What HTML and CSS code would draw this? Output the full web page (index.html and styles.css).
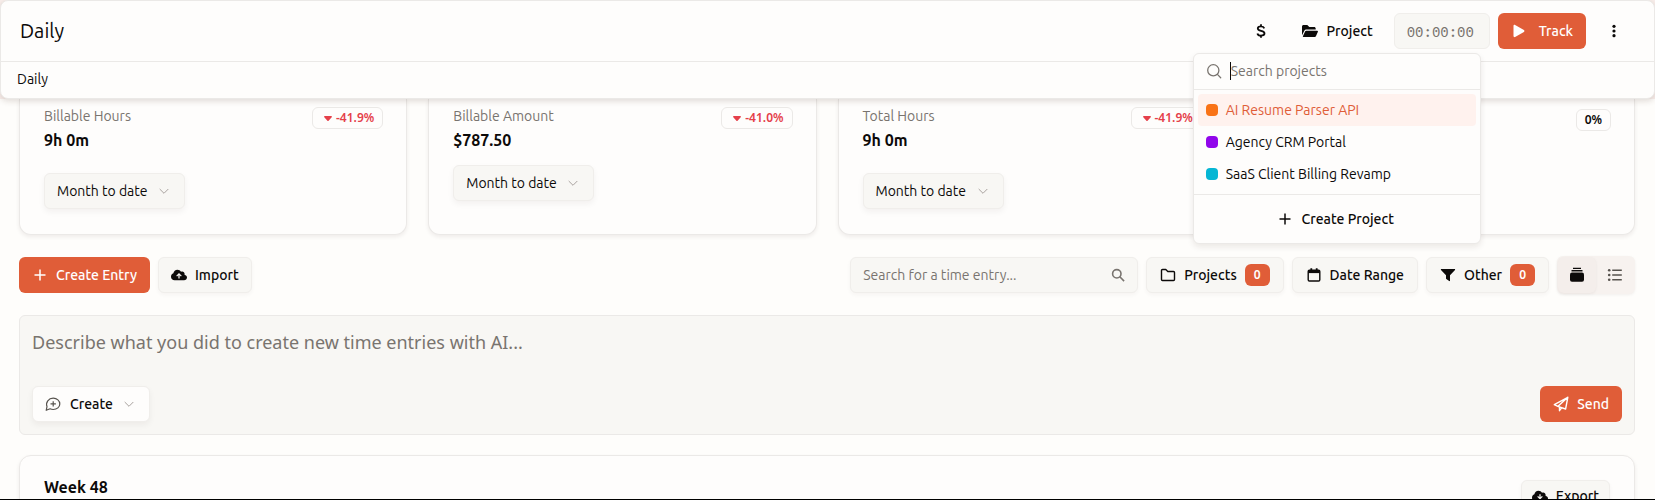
FILE: index.html
```html
<!DOCTYPE html>
<html lang="en">
<head>
<meta charset="utf-8">
<meta name="viewport" content="width=device-width, initial-scale=1">
<title>Daily</title>
<link rel="stylesheet" href="styles.css">
</head>
<body>
<div class="app">
  <header class="header">
    <div class="topbar">
      <h1 class="title">Daily</h1>
      <div class="tracker">
        <button class="icon-btn" type="button" aria-label="Billable">
          <svg class="ico" viewBox="0 0 16 16" fill="none" stroke="currentColor" stroke-width="1.800"><path d="M8 1.200v2.200M8 12.600v2.200M11.300 5.400C10.800 4 9.600 3.400 8 3.400c-1.900 0-3.200.8-3.200 2.200C4.800 8.900 11.500 6.900 11.500 10.300c0 1.500-1.500 2.300-3.500 2.300-1.800 0-3.200-.7-3.600-2.200"/></svg>
        </button>
        <div class="picker">
          <button class="btn ghost" type="button" aria-expanded="true">
            <svg class="ico" viewBox="0 0 16 16" fill="currentColor"><path d="M0 12.200V3.500C0 2.700.7 2 1.500 2H5.300l2 2h4.900c.8 0 1.500.7 1.500 1.500V6.600H4.200c-.8 0-1.500.4-1.900 1.100zM.9 13.300 3.200 8.300c.2-.4.6-.6 1-.6h11c.6 0 .9.6.7 1.100l-2 4.500c-.2.4-.6.7-1.100.7H1.400c-.5 0-.7-.3-.5-.7z"/></svg>
            Project
          </button>
          <div class="menu">
            <label class="menu-search">
              <svg class="ico" viewBox="0 0 16 16" fill="none" stroke="currentColor" stroke-width="1.300" stroke-linecap="round"><circle cx="7.300" cy="7.300" r="5.600"/><path d="m11.400 11.400 3.300 3.300"/></svg>
              <input type="text" placeholder="Search projects" aria-label="Search projects">
            </label>
            <ul class="menu-list">
              <li><button class="option active" type="button"><span class="swatch orange"></span>AI Resume Parser API</button></li>
              <li><button class="option" type="button"><span class="swatch purple"></span>Agency CRM Portal</button></li>
              <li><button class="option" type="button"><span class="swatch cyan"></span>SaaS Client Billing Revamp</button></li>
            </ul>
            <div class="menu-foot">
              <button class="btn ghost" type="button">
                <svg class="ico small" viewBox="0 0 12 12" fill="none" stroke="currentColor" stroke-width="1.500"><path d="M6 .5v11M.5 6h11"/></svg>
                Create Project
              </button>
            </div>
          </div>
        </div>
        <input class="timer" type="text" placeholder="00:00:00" aria-label="Duration">
        <button class="btn primary track" type="button">
          <svg class="ico" viewBox="0 0 16 16" fill="currentColor"><path d="M2.500 2.900v10.200c0 .8.900 1.300 1.600.9l8.800-5.100c.7-.4.7-1.400 0-1.800L4.100 2c-.7-.4-1.600.1-1.600.9z"/></svg>
          Track
        </button>
        <button class="icon-btn" type="button" aria-label="More">
          <svg class="ico" viewBox="0 0 16 16" fill="currentColor"><circle cx="8" cy="3.300" r="1.600"/><circle cx="8" cy="8" r="1.600"/><circle cx="8" cy="12.700" r="1.600"/></svg>
        </button>
      </div>
    </div>
    <nav class="crumbs"><a href="#daily">Daily</a></nav>
  </header>

  <main class="content">
    <section class="stats">
      <article class="card stat">
        <div class="stat-head"><div><p class="label">Billable Hours</p><p class="value">9h 0m</p></div>
          <span class="delta down"><svg viewBox="0 0 8 5" fill="currentColor"><path d="M.8 0h6.400c.7 0 1 .7.500 1.200L4.600 4.700c-.3.300-.9.300-1.200 0L.3 1.200C-.2.700.1 0 .8 0z"/></svg>-41.9%</span></div>
        <label class="select"><select aria-label="Billable hours period"><option>Month to date</option></select>
          <svg class="chev" viewBox="0 0 10 10" fill="none" stroke="currentColor"><path d="m.7 3 4.300 4.300L9.300 3"/></svg></label>
      </article>
      <article class="card stat tight">
        <div class="stat-head"><div><p class="label">Billable Amount</p><p class="value">$787.50</p></div>
          <span class="delta down"><svg viewBox="0 0 8 5" fill="currentColor"><path d="M.8 0h6.400c.7 0 1 .7.500 1.200L4.600 4.700c-.3.300-.9.300-1.200 0L.3 1.200C-.2.700.1 0 .8 0z"/></svg>-41.0%</span></div>
        <label class="select"><select aria-label="Billable amount period"><option>Month to date</option></select>
          <svg class="chev" viewBox="0 0 10 10" fill="none" stroke="currentColor"><path d="m.7 3 4.300 4.300L9.300 3"/></svg></label>
      </article>
      <article class="card stat">
        <div class="stat-head"><div><p class="label">Total Hours</p><p class="value">9h 0m</p></div>
          <span class="delta down"><svg viewBox="0 0 8 5" fill="currentColor"><path d="M.8 0h6.400c.7 0 1 .7.500 1.200L4.600 4.700c-.3.300-.9.300-1.200 0L.3 1.200C-.2.700.1 0 .8 0z"/></svg>-41.9%</span></div>
        <label class="select"><select aria-label="Total hours period"><option>Month to date</option></select>
          <svg class="chev" viewBox="0 0 10 10" fill="none" stroke="currentColor"><path d="m.7 3 4.300 4.300L9.300 3"/></svg></label>
      </article>
      <article class="card stat last">
        <div class="stat-head"><span class="delta">0%</span></div>
      </article>
    </section>

    <section class="toolbar">
      <button class="btn primary" type="button">
        <svg class="ico" viewBox="0 0 16 16" fill="none" stroke="currentColor" stroke-width="1.500"><path d="M8 2.500v11M2.500 8h11"/></svg>
        Create Entry
      </button>
      <button class="btn soft import" type="button">
        <svg class="ico" viewBox="0 0 18 16" fill="currentColor"><path fill-rule="evenodd" d="M4.100 14C1.800 14 0 12.200 0 9.900c0-1.800 1.100-3.300 2.700-3.800C2.900 3.700 4.900 2 7.300 2c1.700 0 3.200.9 4 2.300.4-.2.900-.3 1.300-.3 1.500 0 2.700 1.200 2.700 2.700 0 .3 0 .600-.1.900 1.600.4 2.800 1.600 2.800 3.200 0 1.800-1.500 3.200-3.300 3.200zM9 5.700 5.900 8.800l.9.900 1.500-1.500v3.600h1.400V8.200l1.500 1.500.9-.9z"/></svg>
        Import
      </button>
      <div class="filters">
        <label class="search">
          <input type="text" placeholder="Search for a time entry..." aria-label="Search for a time entry">
          <svg class="ico" viewBox="0 0 16 16" fill="none" stroke="currentColor" stroke-width="1.600"><circle cx="6.800" cy="6.800" r="4.200"/><path d="m9.800 9.800 4.300 4.300"/></svg>
        </label>
        <button class="btn soft" type="button">
          <svg class="ico" viewBox="0 0 16 16" fill="none" stroke="currentColor" stroke-width="1.400" stroke-linejoin="round"><path d="M1.500 12.500v-9c0-.6.4-1 1-1h3.300l2 2h5.700c.6 0 1 .4 1 1v7c0 .6-.4 1-1 1h-11c-.6 0-1-.4-1-1z"/></svg>
          Projects <span class="count">0</span>
        </button>
        <button class="btn soft" type="button">
          <svg class="ico" viewBox="0 0 16 16" fill="none" stroke="currentColor" stroke-width="1.400"><rect x="2.200" y="3.200" width="11.600" height="10.800" rx="1.200"/><path d="M2.200 4.800h11.600" stroke-width="2.600"/><path d="M5.300 1.300v3M10.700 1.300v3" stroke-width="1.800"/></svg>
          Date Range
        </button>
        <button class="btn soft" type="button">
          <svg class="ico" viewBox="0 0 16 16" fill="currentColor"><path d="M1.400 2h13.200c.5 0 .7.600.4.900L10 8.300v5.400c0 .4-.5.700-.8.400l-2.900-2.200a.6.600 0 0 1-.3-.5V8.300L1 2.900C.7 2.600.9 2 1.400 2z"/></svg>
          Other <span class="count">0</span>
        </button>
        <div class="toggle">
          <button class="on" type="button" aria-label="Cards"><svg class="ico" viewBox="0 0 16 16" fill="currentColor"><path d="M4 .8h8V2H4zM2.500 3.100h11v1.400h-11z"/><rect x="1" y="5.400" width="14" height="9.400" rx="2"/></svg></button>
          <button type="button" aria-label="List"><svg class="ico" viewBox="0 0 16 16" fill="currentColor"><circle cx="2.200" cy="3.200" r="1.300"/><circle cx="2.200" cy="8" r="1.300"/><circle cx="2.200" cy="12.800" r="1.300"/><path d="M5.200 2.500h9.600v1.400H5.200zM5.200 7.300h9.600v1.400H5.200zM5.200 12.100h9.600v1.400H5.200z"/></svg></button>
        </div>
      </div>
    </section>

    <section class="composer">
      <textarea rows="1" placeholder="Describe what you did to create new time entries with AI..." aria-label="Describe what you did"></textarea>
      <div class="composer-foot">
        <label class="select mode">
          <svg class="lead" viewBox="0 0 16 16" fill="none" stroke="currentColor" stroke-width="1.200" stroke-linejoin="round"><path d="M1.200 14.300 2 10.600C.4 6.300 3.600 2.200 8.200 2.200c3.800 0 6.600 2.500 6.600 5.700s-2.800 5.600-6.600 5.600c-1.200 0-2.200-.2-3.100-.7zM8.200 5.200v5.400M5.500 7.900h5.400"/></svg>
          <select aria-label="Mode"><option>Create</option></select>
          <svg class="chev" viewBox="0 0 10 10" fill="none" stroke="currentColor"><path d="m.7 3 4.300 4.300L9.300 3"/></svg>
        </label>
        <button class="btn primary" type="button">
          <svg class="ico" viewBox="0 0 16 16" fill="none" stroke="currentColor" stroke-width="1.400" stroke-linejoin="round"><path d="M14.800 1.300 1.300 8.700l3.500 1.700 7.800 2.600zM14.800 1.300 4.800 10.400M6.500 11v3.700l2.100-2.900"/></svg>
          Send
        </button>
      </div>
    </section>

    <section class="card week">
      <h2>Week 48</h2>
      <button class="btn soft compact" type="button">
        <svg class="ico" viewBox="0 0 18 16" fill="currentColor"><path fill-rule="evenodd" d="M4.100 14C1.800 14 0 12.200 0 9.900c0-1.800 1.100-3.300 2.700-3.800C2.900 3.700 4.900 2 7.300 2c1.700 0 3.200.9 4 2.300.4-.2.900-.3 1.300-.3 1.500 0 2.700 1.200 2.700 2.700 0 .3 0 .600-.1.900 1.600.4 2.800 1.600 2.800 3.200 0 1.800-1.500 3.200-3.300 3.200zM9 12l3.100-3.100-.9-.9-1.500 1.500V5.900H8.300v3.600L6.800 8l-.9.900z"/></svg>
        Export
      </button>
    </section>
  </main>
</div>
</body>
</html>
```
FILE: styles.css
```css
* { box-sizing: border-box; }

:root {
  --ink: #0c0a09;
  --muted: #79746f;
  --line: #ebe9e7;
  --surface: #fefdfc;
  --soft: #f8f7f4;
  --accent: #e05d38;
}

body {
  margin: 0;
  background: #f9efec;
  color: var(--ink);
  font: 14px/20px Ubuntu, "Noto Sans", "Open Sans", sans-serif;
}

button, input, select, textarea {
  font: inherit;
  color: inherit;
  margin: 0;
  border: 0;
  background: none;
}

h1, h2, p, ul { margin: 0; padding: 0; }
svg { flex: none; }
.ico { width: 16px; height: 16px; }
.ico.small { width: 12px; height: 12px; }
::placeholder { color: var(--muted); opacity: 1; }

.app {
  display: flex;
  flex-direction: column;
  height: 100vh;
  overflow: hidden;
  border-bottom: 1px solid #000;
}

.header {
  flex: none;
  position: relative;
  z-index: 2;
  border: 1px solid var(--line);
  border-radius: 8px;
  background: var(--surface);
  box-shadow: 0 2px 6px rgba(60, 30, 20, .16);
}

.topbar {
  display: flex;
  align-items: center;
  justify-content: space-between;
  height: 61px;
  padding: 0 20px 0 19px;
  border-bottom: 1px solid var(--line);
}

.title { font-size: 20px; line-height: 28px; font-weight: 400; }
.tracker { display: flex; align-items: center; gap: 8px; }
.crumbs { padding: 7px 16px 9px; }
.crumbs a { color: inherit; text-decoration: none; }

.btn {
  display: inline-flex;
  align-items: center;
  gap: 8px;
  height: 36px;
  padding: 0 12px 1px;
  border: 1px solid transparent;
  border-radius: 6px;
  font-weight: 500;
  white-space: nowrap;
}
.btn.primary { background: var(--accent); color: #fff; }
.btn.soft {
  padding: 0 13px 1px;
  background: var(--soft);
  border-color: #f0eeeb;
  box-shadow: 0 2px 4px rgba(40, 20, 10, .04);
}
.btn.import { padding: 0 12px 1px; }
.btn.compact { height: 32px; padding: 0 10px 1px; }
.btn.track { gap: 12px; }

.icon-btn {
  display: grid;
  place-items: center;
  width: 40px;
  height: 36px;
  padding: 0;
}

.timer {
  width: 96px;
  height: 36px;
  padding: 0 12px;
  border: 1px solid #f0eeeb;
  border-radius: 6px;
  background: var(--soft);
  font-family: "Ubuntu Mono", "DejaVu Sans Mono", monospace;
  font-size: 15px;
}

.picker { position: relative; }
.menu {
  position: absolute;
  top: 40px;
  right: -95px;
  width: 288px;
  border: 1px solid var(--line);
  border-radius: 6px;
  background: var(--surface);
  box-shadow: 0 3px 6px rgba(40, 20, 10, .09);
}
.menu-search {
  display: flex;
  align-items: center;
  gap: 8px;
  height: 36px;
  padding: 0 12px 1px;
  color: var(--muted);
  border-bottom: 1px solid var(--line);
}
.menu-search input {
  flex: 1;
  min-width: 0;
  height: 18px;
  padding: 0;
  border-left: 1px solid var(--ink);
  outline: 0;
  color: var(--ink);
}
.menu-list { list-style: none; padding: 4px; border-bottom: 1px solid var(--line); }
.option {
  display: flex;
  align-items: center;
  gap: 8px;
  width: 100%;
  height: 32px;
  padding: 0 8px 1px;
  border-radius: 4px;
}
.option.active { background: #fff2ee; color: var(--accent); }
.swatch { width: 12px; height: 12px; border-radius: 4px; }
.swatch.orange { background: #f97316; }
.swatch.purple { background: #9106eb; }
.swatch.cyan { background: #06b6d4; }
.menu-foot { display: flex; justify-content: center; padding: 6px; }
.menu-foot .btn { gap: 10px; }

.content {
  flex: 1;
  min-height: 0;
  padding: 0 20px 0 19px;
  background: #fefdfb;
}

.stats {
  display: grid;
  grid-template-columns: repeat(4, 1fr);
  gap: 21px;
}
.card {
  border: 1px solid var(--line);
  border-radius: 12px;
  background: var(--surface);
  box-shadow: 0 2px 4px rgba(40, 20, 10, .07);
}
.stat {
  border-top: 0;
  border-radius: 0 0 12px 12px;
  padding: 7px 23px 25px 24px;
}
.stat.tight { padding-bottom: 33px; }
.stat-head {
  display: flex;
  align-items: flex-start;
  justify-content: space-between;
  margin-bottom: 21px;
}
.stat.tight .stat-head { margin-bottom: 13px; }
.stat.last .stat-head { justify-content: flex-end; padding-top: 2px; }
.label { color: var(--muted); }
.value { margin-top: 2px; font-size: 16px; line-height: 24px; font-weight: 600; }

.delta {
  display: inline-flex;
  align-items: center;
  gap: 4px;
  margin-top: 1px;
  padding: 0 8px;
  border: 1px solid var(--line);
  border-radius: 6px;
  font: 600 12px/20px "Noto Sans", sans-serif;
}
.delta.down { color: #e5404a; padding-left: 11px; }
.delta svg { width: 8px; height: 5px; }

.select {
  display: inline-grid;
  align-items: center;
  height: 36px;
  border: 1px solid #f0eeeb;
  border-radius: 6px;
  background: var(--soft);
  box-shadow: 0 3px 6px rgba(40, 20, 10, .05);
}
.select > * { grid-area: 1 / 1; }
.select select {
  appearance: none;
  height: 34px;
  padding: 0 36px 0 12px;
}
.chev {
  justify-self: end;
  width: 10px;
  height: 10px;
  margin-right: 15px;
  color: #a8a29e;
  pointer-events: none;
}
.select.mode { background: var(--surface); font-weight: 500; }
.select.mode select { padding-left: 37px; }
.lead { width: 16px; height: 16px; margin-left: 12px; color: #57534e; }

.toolbar {
  display: flex;
  flex-wrap: wrap;
  align-items: center;
  gap: 8px;
  margin: 21px 0;
}
.filters {
  display: flex;
  flex-wrap: wrap;
  align-items: center;
  gap: 8px;
  margin-left: auto;
}
.search {
  display: flex;
  align-items: center;
  width: 288px;
  height: 36px;
  padding: 0 11px 0 12px;
  border: 1px solid #f0eeeb;
  border-radius: 6px;
  background: var(--soft);
  color: var(--muted);
  box-shadow: 0 2px 4px rgba(40, 20, 10, .04);
}
.search input { flex: 1; min-width: 0; padding: 0; }
.count {
  padding: 0 9px;
  border-radius: 6px;
  background: var(--accent);
  color: #fff;
  font: 600 12px/22px "Noto Sans", sans-serif;
}
.toggle {
  display: flex;
  padding: 1px;
  border-radius: 6px;
  background: #f7f2ef;
  box-shadow: 0 1px 3px rgba(40, 20, 10, .06);
}
.toggle button {
  display: grid;
  place-items: center;
  width: 38px;
  height: 36px;
  padding: 0;
  border-radius: 6px;
  color: #57534e;
}
.toggle .on { background: #f4eeeb; color: var(--ink); box-shadow: 0 1px 3px rgba(40, 20, 10, .06); }

.composer {
  display: flex;
  flex-direction: column;
  gap: 28px;
  padding: 12px;
  border: 1px solid var(--line);
  border-radius: 6px;
  background: var(--soft);
}
.composer textarea {
  width: 100%;
  height: 30px;
  padding: 0;
  resize: none;
  overflow: hidden;
  font: 18px/28px "Noto Sans", sans-serif;
}
.composer-foot { display: flex; justify-content: space-between; }

.week {
  display: flex;
  align-items: flex-start;
  justify-content: space-between;
  margin-top: 20px;
  padding: 24px 24px 48px;
}
.week h2 { margin-top: -5px; font-size: 16px; line-height: 24px; font-weight: 600; }
```
